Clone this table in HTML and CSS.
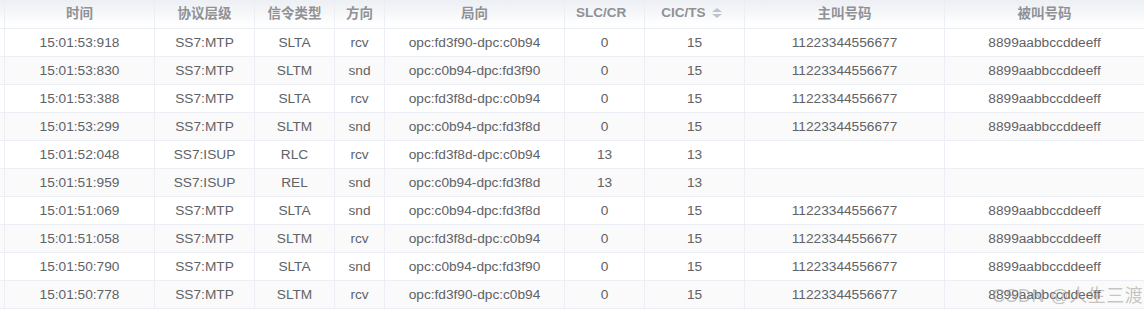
FILE: index.html
```html
<!DOCTYPE html>
<html lang="zh">
<head>
<meta charset="utf-8">
<link rel="stylesheet" href="styles.css">
</head>
<body>
<div class="table">
  <div class="row head">
    <div class="cell"></div>
    <div class="cell">时间</div>
    <div class="cell">协议层级</div>
    <div class="cell">信令类型</div>
    <div class="cell">方向</div>
    <div class="cell">局向</div>
    <div class="cell">SLC/CR</div>
    <div class="cell">CIC/TS<span class="caret"><i class="up"></i><i class="down"></i></span></div>
    <div class="cell">主叫号码</div>
    <div class="cell">被叫号码</div>
  </div>
  <div class="row"><div class="cell"></div><div class="cell">15:01:53:918</div><div class="cell">SS7:MTP</div><div class="cell">SLTA</div><div class="cell">rcv</div><div class="cell">opc:fd3f90-dpc:c0b94</div><div class="cell">0</div><div class="cell">15</div><div class="cell">11223344556677</div><div class="cell">8899aabbccddeeff</div></div>
  <div class="row"><div class="cell"></div><div class="cell">15:01:53:830</div><div class="cell">SS7:MTP</div><div class="cell">SLTM</div><div class="cell">snd</div><div class="cell">opc:c0b94-dpc:fd3f90</div><div class="cell">0</div><div class="cell">15</div><div class="cell">11223344556677</div><div class="cell">8899aabbccddeeff</div></div>
  <div class="row"><div class="cell"></div><div class="cell">15:01:53:388</div><div class="cell">SS7:MTP</div><div class="cell">SLTA</div><div class="cell">rcv</div><div class="cell">opc:fd3f8d-dpc:c0b94</div><div class="cell">0</div><div class="cell">15</div><div class="cell">11223344556677</div><div class="cell">8899aabbccddeeff</div></div>
  <div class="row"><div class="cell"></div><div class="cell">15:01:53:299</div><div class="cell">SS7:MTP</div><div class="cell">SLTM</div><div class="cell">snd</div><div class="cell">opc:c0b94-dpc:fd3f8d</div><div class="cell">0</div><div class="cell">15</div><div class="cell">11223344556677</div><div class="cell">8899aabbccddeeff</div></div>
  <div class="row"><div class="cell"></div><div class="cell">15:01:52:048</div><div class="cell">SS7:ISUP</div><div class="cell">RLC</div><div class="cell">rcv</div><div class="cell">opc:fd3f8d-dpc:c0b94</div><div class="cell">13</div><div class="cell">13</div><div class="cell"></div><div class="cell"></div></div>
  <div class="row"><div class="cell"></div><div class="cell">15:01:51:959</div><div class="cell">SS7:ISUP</div><div class="cell">REL</div><div class="cell">snd</div><div class="cell">opc:c0b94-dpc:fd3f8d</div><div class="cell">13</div><div class="cell">13</div><div class="cell"></div><div class="cell"></div></div>
  <div class="row"><div class="cell"></div><div class="cell">15:01:51:069</div><div class="cell">SS7:MTP</div><div class="cell">SLTA</div><div class="cell">snd</div><div class="cell">opc:c0b94-dpc:fd3f8d</div><div class="cell">0</div><div class="cell">15</div><div class="cell">11223344556677</div><div class="cell">8899aabbccddeeff</div></div>
  <div class="row"><div class="cell"></div><div class="cell">15:01:51:058</div><div class="cell">SS7:MTP</div><div class="cell">SLTM</div><div class="cell">rcv</div><div class="cell">opc:fd3f8d-dpc:c0b94</div><div class="cell">0</div><div class="cell">15</div><div class="cell">11223344556677</div><div class="cell">8899aabbccddeeff</div></div>
  <div class="row"><div class="cell"></div><div class="cell">15:01:50:790</div><div class="cell">SS7:MTP</div><div class="cell">SLTA</div><div class="cell">snd</div><div class="cell">opc:c0b94-dpc:fd3f90</div><div class="cell">0</div><div class="cell">15</div><div class="cell">11223344556677</div><div class="cell">8899aabbccddeeff</div></div>
  <div class="row"><div class="cell"></div><div class="cell">15:01:50:778</div><div class="cell">SS7:MTP</div><div class="cell">SLTM</div><div class="cell">rcv</div><div class="cell">opc:fd3f90-dpc:c0b94</div><div class="cell">0</div><div class="cell">15</div><div class="cell">11223344556677</div><div class="cell">8899aabbccddeeff</div></div>
</div>
<div class="watermark">CSDN @人生三渡</div>
</body>
</html>
```
FILE: styles.css
```css
html, body {
  margin: 0;
  padding: 0;
  background: #fff;
  overflow: hidden;
}
body {
  width: 1144px;
  height: 311px;
  position: relative;
  font-family: "Liberation Sans", Arial, "Noto Sans CJK SC", sans-serif;
}
.table {
  width: 1145px;
}
.row {
  display: grid;
  grid-template-columns: 5px 150px 100px 80px 50px 180px 80px 100px 200px 200px;
  height: 28px;
  font-size: 13.7px;
  color: #606266;
}
.row:nth-child(odd) {
  background: #fafafa;
}
.row.head {
  height: 29px;
  background: linear-gradient(#eceff3 0%, #f6f7f9 45%, #ffffff 85%);
  color: #8f9196;
  font-weight: bold;
  font-size: 13.5px;
}
.cell {
  box-sizing: border-box;
  border-right: 1px solid #ebeef5;
  border-bottom: 1px solid #ebeef5;
  display: flex;
  align-items: center;
  justify-content: center;
  white-space: nowrap;
  overflow: hidden;
}
.head .cell {
  padding-bottom: 4px;
}
.head .cell:nth-child(7) {
  padding-right: 7px;
}
.head .cell:nth-child(8) {
  padding-right: 6px;
}
.caret {
  display: inline-flex;
  flex-direction: column;
  align-items: center;
  gap: 2px;
  margin-left: 6px;
  margin-top: 1px;
}
.caret i {
  width: 0;
  height: 0;
  border-left: 5px solid transparent;
  border-right: 5px solid transparent;
}
.caret .up {
  border-bottom: 4px solid #c0c4cc;
}
.caret .down {
  border-top: 4px solid #c0c4cc;
}
.watermark {
  position: absolute;
  left: 992px;
  top: 281px;
  font-size: 18px;
  color: rgba(150, 150, 150, 0.55);
  font-family: "Liberation Sans", "Noto Sans CJK SC", sans-serif;
  letter-spacing: 0.5px;
  white-space: nowrap;
}
```
